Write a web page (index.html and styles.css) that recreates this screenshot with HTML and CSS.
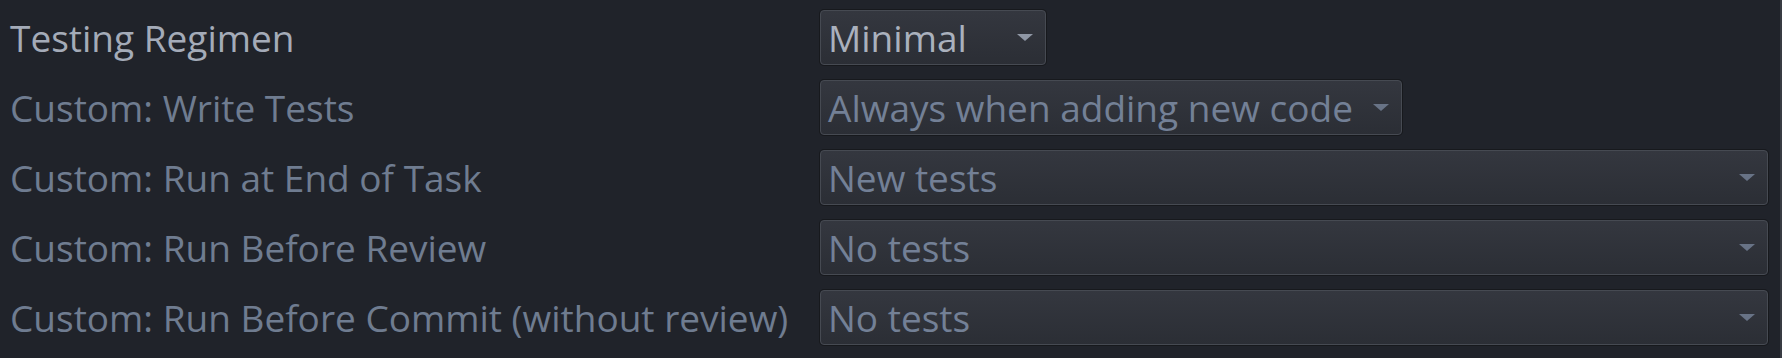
FILE: index.html
```html
<!DOCTYPE html>
<html lang="en">
<head>
  <meta charset="UTF-8">
  <meta name="viewport" content="width=device-width, initial-scale=1.0">
  <title>Testing Settings</title>
  <link rel="stylesheet" href="styles.css">
</head>
<body>
  <div class="settings">
    <div class="label label-main">Testing Regimen</div>
    <div class="field">
      <div class="select select-auto select-main">
        <span class="value">Minimal</span>
        <span class="arrow"></span>
      </div>
    </div>

    <div class="label">Custom: Write Tests</div>
    <div class="field">
      <div class="select select-auto">
        <span class="value">Always when adding new code</span>
        <span class="arrow"></span>
      </div>
    </div>

    <div class="label">Custom: Run at End of Task</div>
    <div class="field">
      <div class="select">
        <span class="value">New tests</span>
        <span class="arrow"></span>
      </div>
    </div>

    <div class="label">Custom: Run Before Review</div>
    <div class="field">
      <div class="select">
        <span class="value">No tests</span>
        <span class="arrow"></span>
      </div>
    </div>

    <div class="label">Custom: Run Before Commit (without review)</div>
    <div class="field">
      <div class="select">
        <span class="value">No tests</span>
        <span class="arrow"></span>
      </div>
    </div>
  </div>
</body>
</html>
```

FILE: styles.css
```css
html, body {
  margin: 0;
  height: 100%;
}
body {
  background-color: #20232a;
  font-family: "Open Sans", "DejaVu Sans", sans-serif;
  font-size: 37px;
  color: #6f7c90;
  border-right: 2px solid #383b42;
  box-sizing: border-box;
  overflow: hidden;
}
.settings {
  display: grid;
  grid-template-columns: 810px 948px;
  row-gap: 15px;
  padding: 10px 0 0 10px;
  align-items: center;
}
.label {
  white-space: nowrap;
  line-height: 55px;
}
.label-main {
  color: #a4abb8;
}
.field {
  display: flex;
}
.select {
  flex: 1;
  height: 55px;
  box-sizing: border-box;
  display: flex;
  align-items: center;
  justify-content: space-between;
  padding: 0 12px 0 7px;
  border: 1px solid #464a52;
  border-radius: 4px;
  background: linear-gradient(#34373f, #2b2e35);
  box-shadow: 0 0 0 1px #17191d;
  color: #738096;
}
.select-auto {
  flex: none;
  min-width: 226px;
}
.select-main {
  color: #aab1bd;
}
.value {
  white-space: nowrap;
}
.arrow {
  width: 0;
  height: 0;
  margin-left: 20px;
  border-left: 8px solid transparent;
  border-right: 8px solid transparent;
  border-top: 7px solid #687386;
}
.select-main .arrow {
  border-top-color: #8f97a5;
}
```
